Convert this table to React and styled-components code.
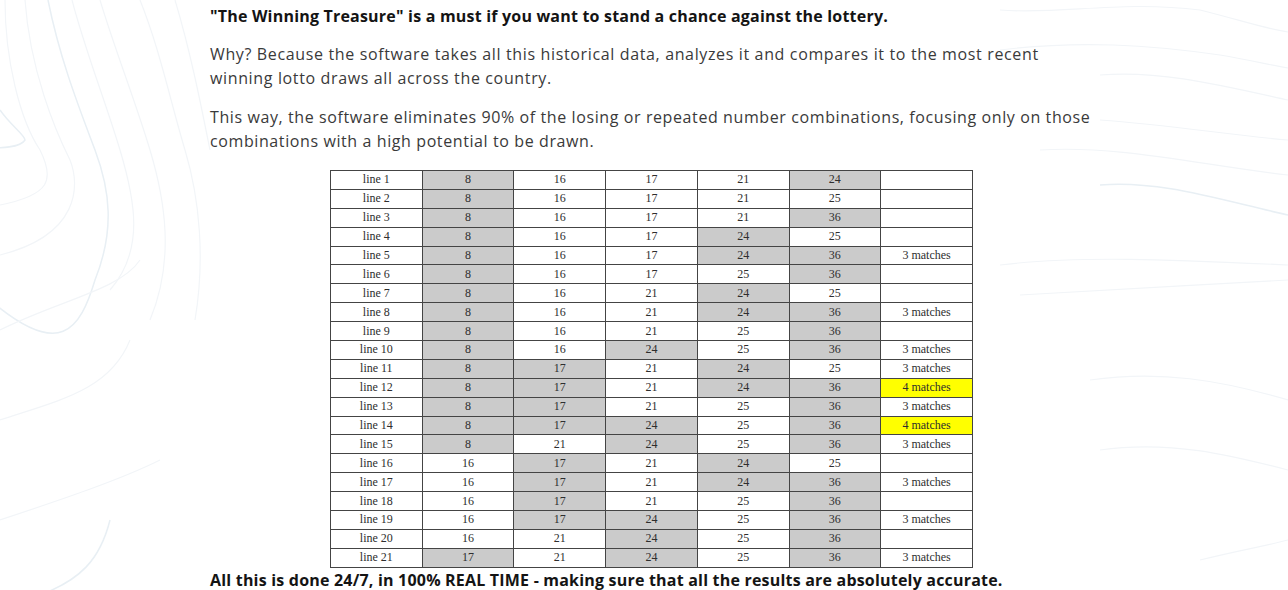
import React from "react";
import styled, { createGlobalStyle } from "styled-components";

const GlobalStyle = createGlobalStyle`
  html, body {
    margin: 0;
    padding: 0;
    background: #ffffff;
  }
  body {
    font-family: "Open Sans", "Liberation Sans", sans-serif;
    overflow: hidden;
  }
`;

const Page = styled.div`
  position: relative;
  width: 1288px;
  height: 590px;
  overflow: hidden;
  background: #fff;
`;

const Contours = styled.svg`
  position: absolute;
  inset: 0;
  width: 100%;
  height: 100%;
  pointer-events: none;
`;

const Content = styled.div`
  position: relative;
  width: 892px;
  margin-left: 210px;
  padding-top: 4px;
`;

const Heading = styled.p`
  margin: 0 0 14px;
  font-size: 16px;
  line-height: 24px;
  font-weight: 700;
  color: #141414;
  letter-spacing: 0.2px;
`;

const Para = styled.p`
  margin: 0 0 15px;
  font-size: 16px;
  line-height: 24px;
  color: #3a3a3a;
  letter-spacing: ${({ $spacing }) => $spacing || "0.4px"};
`;

const Footer = styled(Heading)`
  margin: 0;
`;

const Table = styled.table`
  border-collapse: collapse;
  margin: 17px 0 0 120px;
  width: 643px;
  table-layout: fixed;
  font-family: "Liberation Serif", "DejaVu Serif", serif;
  font-size: 12px;
  color: #2e2e2e;
  border: 1.5px solid #333;
`;

const Cell = styled.td`
  height: 17.9px;
  padding: 0;
  text-align: center;
  border: 1px solid #444;
  background: ${({ $fill }) => $fill || "#fff"};
  line-height: 17px;
`;

const winners = [8, 17, 24, 36];

const rows = [
  [8, 16, 17, 21, 24, ""],
  [8, 16, 17, 21, 25, ""],
  [8, 16, 17, 21, 36, ""],
  [8, 16, 17, 24, 25, ""],
  [8, 16, 17, 24, 36, "3 matches"],
  [8, 16, 17, 25, 36, ""],
  [8, 16, 21, 24, 25, ""],
  [8, 16, 21, 24, 36, "3 matches"],
  [8, 16, 21, 25, 36, ""],
  [8, 16, 24, 25, 36, "3 matches"],
  [8, 17, 21, 24, 25, "3 matches"],
  [8, 17, 21, 24, 36, "4 matches"],
  [8, 17, 21, 25, 36, "3 matches"],
  [8, 17, 24, 25, 36, "4 matches"],
  [8, 21, 24, 25, 36, "3 matches"],
  [16, 17, 21, 24, 25, ""],
  [16, 17, 21, 24, 36, "3 matches"],
  [16, 17, 21, 25, 36, ""],
  [16, 17, 24, 25, 36, "3 matches"],
  [16, 21, 24, 25, 36, ""],
  [17, 21, 24, 25, 36, "3 matches"],
];

// the 17 in the fourth column is left white in the original chart
const isShaded = (n, col) => winners.includes(n) && !(n === 17 && col === 2);

const Background = () => (
  <Contours viewBox="0 0 1288 590" preserveAspectRatio="none">
    <g fill="none" stroke="#e8eff4" strokeWidth="1.5">
      <path d="M48 0 C60 60 80 110 95 150 C110 190 115 230 95 280 C80 330 60 360 -10 300" />
      <path d="M0 110 C10 125 25 135 25 140 C20 148 0 148 -10 148" />
      <path d="M40 595 C80 580 100 560 110 520" />
      <path d="M1100 185 C1160 180 1220 200 1288 215" />
    </g>
    <g fill="none" stroke="#f2f5f8" strokeWidth="1.2">
      <path d="M5 0 C5 60 20 120 40 150 C55 180 50 195 0 205" />
      <path d="M25 0 C30 70 55 130 70 160 C80 185 80 235 0 255" />
      <path d="M72 0 C85 50 105 100 120 150 C135 200 145 250 110 290" />
      <path d="M100 0 C115 50 135 100 150 150 C165 200 175 260 150 320" />
      <path d="M140 0 C160 50 170 100 185 150 C200 200 205 260 195 320" />
      <path d="M175 0 C190 50 200 100 210 150" />
      <path d="M1000 10 C1060 15 1120 0 1200 10 C1240 20 1270 30 1288 32" />
      <path d="M1000 50 C1080 40 1150 45 1220 55 C1250 60 1270 65 1288 68" />
      <path d="M1100 75 C1160 70 1220 85 1288 100" />
      <path d="M1100 120 C1170 125 1230 135 1288 140" />
      <path d="M1040 150 C1120 145 1200 165 1288 175" />
      <path d="M1000 265 C1080 255 1180 260 1288 265" />
      <path d="M1020 295 C1100 290 1200 285 1288 280" />
      <path d="M0 330 C60 300 120 290 140 260" />
      <path d="M0 420 C60 400 110 390 130 340" />
      <path d="M1090 380 C1160 370 1220 380 1288 400" />
      <path d="M1100 450 C1170 440 1230 455 1288 470" />
      <path d="M1200 560 C1240 550 1270 545 1288 540" />
      <path d="M0 520 C60 500 120 480 160 460" />
    </g>
  </Contours>
);

const App = () => {
  return (
    <Page>
      <GlobalStyle />
      <Background />
      <Content>
        <Heading>
          "The Winning Treasure" is a must if you want to stand a chance against the lottery.
        </Heading>
        <Para $spacing="0.64px">
          Why? Because the software takes all this historical data, analyzes it and compares it to the most recent
          winning lotto draws all across the country.
        </Para>
        <Para $spacing="0.6px">
          This way, the software eliminates 90% of the losing or repeated number combinations, focusing only on those
          combinations with a high potential to be drawn.
        </Para>
        <Table>
          <tbody>
            {rows.map((r, i) => (
              <tr key={i}>
                <Cell>line {i + 1}</Cell>
                {r.slice(0, 5).map((n, j) => (
                  <Cell key={j} $fill={isShaded(n, j) ? "#cbcbcb" : null}>
                    {n}
                  </Cell>
                ))}
                <Cell $fill={r[5] === "4 matches" ? "#ffff00" : null}>{r[5]}</Cell>
              </tr>
            ))}
          </tbody>
        </Table>
        <Footer>
          All this is done 24/7, in 100% REAL TIME - making sure that all the results are absolutely accurate.
        </Footer>
      </Content>
    </Page>
  );
};

export default App;
